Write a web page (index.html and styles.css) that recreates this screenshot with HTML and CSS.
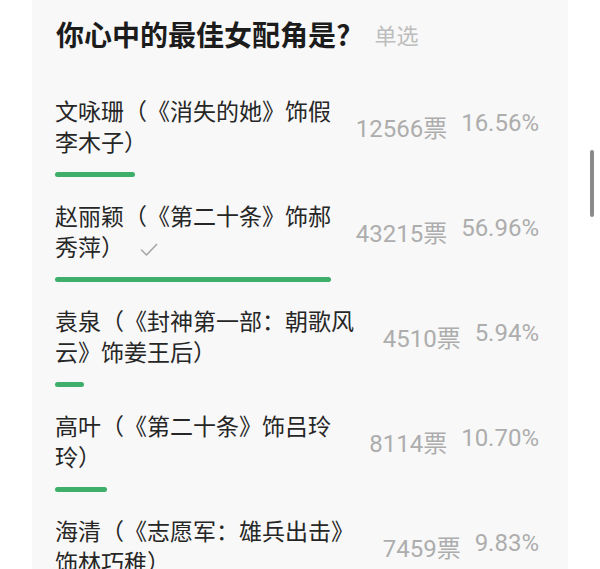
FILE: index.html
```html
<!DOCTYPE html>
<html lang="zh-CN">
<head>
  <meta charset="UTF-8" />
  <title>投票</title>
  <meta name="viewport" content="width=device-width, initial-scale=1" />
  <link rel="stylesheet" href="styles.css">
</head>
<body>
  <div class="poll">
    <div class="poll-head">
      <h2 class="poll-title">你心中的最佳女配角是?</h2>
      <span class="poll-type">单选</span>
    </div>

    <ul class="options">
      <li class="option">
        <div class="option-row">
          <div class="option-name">文咏珊（《消失的她》饰假<br>李木子）</div>
          <div class="option-stat"><span>12566票</span><span>16.56%</span></div>
        </div>
        <div class="bar"><div class="bar-fill" style="width: 16.56%"></div></div>
      </li>
      <li class="option">
        <div class="option-row">
          <div class="option-name">赵丽颖（《第二十条》饰郝<br>秀萍）<svg class="check" width="18" height="14" viewBox="0 0 18 14"><polyline points="1.5,7 6.5,12 16.5,1.5" fill="none" stroke="#a6a6a6" stroke-width="1.6" stroke-linecap="round" stroke-linejoin="round"/></svg></div>
          <div class="option-stat"><span>43215票</span><span>56.96%</span></div>
        </div>
        <div class="bar"><div class="bar-fill" style="width: 56.96%"></div></div>
      </li>
      <li class="option">
        <div class="option-row">
          <div class="option-name">袁泉（《封神第一部：朝歌风<br>云》饰姜王后）</div>
          <div class="option-stat"><span>4510票</span><span>5.94%</span></div>
        </div>
        <div class="bar"><div class="bar-fill" style="width: 5.94%"></div></div>
      </li>
      <li class="option">
        <div class="option-row">
          <div class="option-name">高叶（《第二十条》饰吕玲<br>玲）</div>
          <div class="option-stat"><span>8114票</span><span>10.70%</span></div>
        </div>
        <div class="bar"><div class="bar-fill" style="width: 10.70%"></div></div>
      </li>
      <li class="option">
        <div class="option-row">
          <div class="option-name">海清（《志愿军：雄兵出击》<br>饰林巧稚）</div>
          <div class="option-stat"><span>7459票</span><span>9.83%</span></div>
        </div>
        <div class="bar"><div class="bar-fill" style="width: 9.83%"></div></div>
      </li>
    </ul>
  </div>

  <div class="scroll-thumb"></div>
</body>
</html>
```

FILE: styles.css
```css
body {
  margin: 0;
  background-color: #fff;
  font-family: "Noto Sans CJK SC", "Noto Sans", sans-serif;
  color: #262626;
  text-spacing-trim: space-all;
}

.poll {
  margin: 0 32px;
  padding: 16px 29px 40px 23px;
  background-color: #f8f8f8;
}

.poll-head {
  display: flex;
  align-items: center;
  gap: 24px;
  padding-left: 1px;
}

.poll-title {
  margin: 0;
  font-size: 28px;
  line-height: 36px;
  font-weight: 700;
  color: #1c1c1c;
}

.poll-type {
  font-size: 22px;
  line-height: 36px;
  color: #bdbdbd;
}

.options {
  list-style: none;
  margin: 43px 0 0;
  padding: 0;
}

.option {
  padding-bottom: 23px;
}

.option-row {
  display: flex;
  align-items: center;
  justify-content: space-between;
}

.option-name {
  font-size: 23px;
  line-height: 31px;
  color: #262626;
}

.check {
  margin-left: 16px;
  vertical-align: -1px;
}

.option-stat {
  display: flex;
  gap: 14px;
  font-family: Roboto, "Noto Sans CJK SC", sans-serif;
  font-size: 24px;
  color: #adadad;
  white-space: nowrap;
}

.bar {
  margin-top: 15px;
  height: 5px;
}

.bar-fill {
  height: 100%;
  border-radius: 3px;
  background-color: #3daf6a;
}

.scroll-thumb {
  position: fixed;
  top: 150px;
  left: 590px;
  width: 4px;
  height: 67px;
  border-radius: 2px;
  background-color: #8a8a8a;
}
```
